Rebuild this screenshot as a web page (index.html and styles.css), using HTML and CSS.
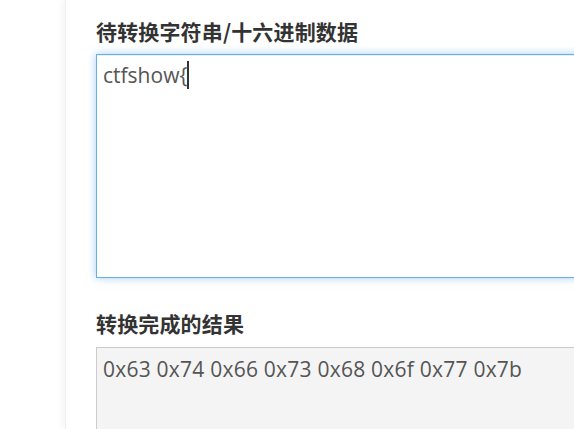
FILE: index.html
```html
<!DOCTYPE html>
<html lang="zh">
<head>
<meta charset="utf-8">
<title>字符串转十六进制</title>
<link rel="stylesheet" href="styles.css">
</head>
<body>
<div class="page">
  <aside class="sidebar"></aside>
  <main class="main">
    <label class="label">待转换字符串/十六进制数据</label>
    <div class="input focused">ctfshow{<span class="caret"></span></div>
    <label class="label second">转换完成的结果</label>
    <div class="input readonly">0x63 0x74 0x66 0x73 0x68 0x6f 0x77 0x7b</div>
  </main>
</div>
</body>
</html>
```
FILE: styles.css
```css
html, body {
  margin: 0;
  padding: 0;
  background: #fff;
  overflow: hidden;
}
.page {
  display: flex;
  width: 574px;
  height: 429px;
  overflow: hidden;
}
.sidebar {
  width: 65px;
  flex: none;
  background: #fff;
}
.main {
  flex: 1;
  border-left: 1px solid #eeeeee;
  box-shadow: -4px 0 6px rgba(0, 0, 0, 0.035);
  padding: 16px 0 0 30px;
  position: relative;
  min-width: 0;
}
.label {
  display: block;
  font-family: "Noto Sans CJK SC", "Open Sans", sans-serif;
  font-weight: 700;
  font-size: 21px;
  line-height: 30px;
  letter-spacing: 0.15px;
  color: #333;
  margin-bottom: 8px;
}
.label.second {
  margin-top: 30px;
  margin-bottom: 9px;
}
.input {
  width: 520px;
  box-sizing: border-box;
  border: 1px solid #ccc;
  padding: 5px 6px;
  font-family: "Open Sans", "Noto Sans", sans-serif;
  font-size: 21px;
  line-height: 30px;
  color: #555;
  white-space: nowrap;
}
.focused {
  height: 224px;
  border-color: #66afe9;
  box-shadow: inset 0 1px 1px rgba(0, 0, 0, 0.075), 0 0 8px rgba(102, 175, 233, 0.6);
}
.readonly {
  height: 120px;
  background: #f4f4f4;
  padding-top: 6px;
  letter-spacing: 0.23px;
}
.caret {
  display: inline-block;
  width: 2px;
  height: 28px;
  background: #333;
  vertical-align: -6px;
  margin-left: 0;
}
```
